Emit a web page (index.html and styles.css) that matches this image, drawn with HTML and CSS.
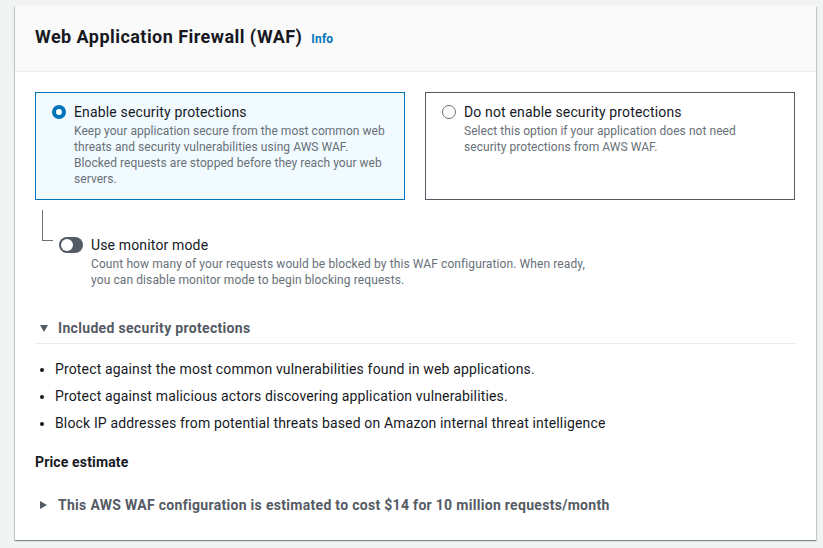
FILE: index.html
```html
<!DOCTYPE html>
<html lang="en">
<head>
<meta charset="utf-8">
<title>Web Application Firewall (WAF)</title>
<link rel="stylesheet" href="styles.css">
</head>
<body>
<section class="panel">
  <header class="panel-header">
    <h2 class="panel-title">Web Application Firewall (WAF)</h2>
    <a class="info" href="#">Info</a>
  </header>
  <div class="panel-body">
    <div class="tiles">
      <label class="tile tile-selected">
        <span class="radio radio-on"></span>
        <span class="tile-text">
          <span class="tile-title">Enable security protections</span>
          <span class="tile-desc">Keep your application secure from the most common web threats and security vulnerabilities using AWS WAF. Blocked requests are stopped before they reach your web servers.</span>
        </span>
      </label>
      <label class="tile">
        <span class="radio"></span>
        <span class="tile-text">
          <span class="tile-title">Do not enable security protections</span>
          <span class="tile-desc">Select this option if your application does not need security protections from AWS WAF.</span>
        </span>
      </label>
    </div>

    <div class="monitor">
      <span class="connector"></span>
      <div class="monitor-content">
        <span class="toggle"><span class="knob"></span></span>
        <div class="monitor-text">
          <div class="monitor-title">Use monitor mode</div>
          <div class="monitor-desc">Count how many of your requests would be blocked by this WAF configuration. When ready, you can disable monitor mode to begin blocking requests.</div>
        </div>
      </div>
    </div>

    <div class="expander">
      <div class="expander-head">
        <span class="caret caret-down"></span>
        <span>Included security protections</span>
      </div>
      <ul class="bullets">
        <li>Protect against the most common vulnerabilities found in web applications.</li>
        <li>Protect against malicious actors discovering application vulnerabilities.</li>
        <li>Block IP addresses from potential threats based on Amazon internal threat intelligence</li>
      </ul>
    </div>

    <div class="price-label">Price estimate</div>
    <div class="price-row">
      <span class="caret caret-right"></span>
      <span>This AWS WAF configuration is estimated to cost $14 for 10 million requests/month</span>
    </div>
  </div>
</section>
</body>
</html>
```

FILE: styles.css
```css
* { box-sizing: border-box; }
html, body { margin: 0; padding: 0; }
body {
  background: #f2f3f3;
  font-family: Roboto, "Liberation Sans", Arial, sans-serif;
  color: #16191f;
  font-size: 14px;
  line-height: 22px;
  letter-spacing: 0.15px;
  padding: 6px 7px 7px 15px;
}
.panel {
  width: 801px;
  background: #fff;
  box-shadow: 0 1px 1px 0 rgba(0,28,36,0.3), 1px 1px 1px 0 rgba(0,28,36,0.15), -1px 1px 1px 0 rgba(0,28,36,0.15);
}
.panel-header {
  display: flex;
  align-items: baseline;
  gap: 9px;
  height: 66px;
  padding: 20px 20px 0 20px;
  background: #fafafa;
  border-bottom: 1px solid #eaeded;
}
.panel-title {
  margin: 0;
  font-size: 18px;
  line-height: 22px;
  font-weight: 700;
  letter-spacing: 0.45px;
  color: #16191f;
}
.info {
  font-size: 12px;
  font-weight: 700;
  color: #0073bb;
  text-decoration: none;
}
.panel-body {
  padding: 20px 20px 24px 20px;
}
.tiles {
  display: grid;
  grid-template-columns: 370px 370px;
  gap: 20px;
}
.tile {
  display: flex;
  gap: 8px;
  padding: 8px 16px 12px 16px;
  border: 1px solid #545b64;
  background: #fff;
}
.tile-selected {
  border-color: #0073bb;
  background: #f1faff;
}
.radio {
  flex: none;
  width: 14px;
  height: 14px;
  margin-top: 4px;
  border-radius: 50%;
  border: 1.5px solid #687078;
  background: #fff;
}
.radio-on {
  border: 4px solid #0073bb;
}
.tile-text { display: flex; flex-direction: column; }
.tile-title { font-size: 14px; line-height: 22px; color: #16191f; }
.tile-desc { font-size: 12px; line-height: 16px; color: #687078; letter-spacing: 0.05px; }

.monitor {
  display: flex;
  margin-top: 10px;
  padding-left: 7px;
}
.connector {
  flex: none;
  width: 11px;
  height: 31px;
  border-left: 1px solid #687078;
  border-bottom: 1px solid #687078;
  margin-right: 6px;
}
.monitor-content {
  display: flex;
  gap: 8px;
  margin-top: 24px;
}
.toggle {
  flex: none;
  position: relative;
  width: 24px;
  height: 16px;
  margin-top: 3px;
  border-radius: 8px;
  background: #545b64;
}
.knob {
  position: absolute;
  left: 2px;
  top: 2px;
  width: 12px;
  height: 12px;
  border-radius: 50%;
  background: #fff;
}
.monitor-title { font-size: 14px; line-height: 22px; }
.monitor-desc { font-size: 12px; line-height: 16px; color: #687078; letter-spacing: 0.1px; width: 505px; }

.expander { margin-top: 29px; }
.expander-head {
  display: flex;
  align-items: center;
  gap: 10px;
  padding: 0 0 4px 5px;
  font-weight: 700;
  letter-spacing: 0.32px;
  color: #545b64;
  border-bottom: 1px solid #eaeded;
}
.caret { width: 0; height: 0; flex: none; }
.caret-down {
  border-left: 4px solid transparent;
  border-right: 4px solid transparent;
  border-top: 7px solid #545b64;
}
.caret-right {
  border-top: 4px solid transparent;
  border-bottom: 4px solid transparent;
  border-left: 7px solid #545b64;
}
.bullets {
  margin: 14px 0 0 0;
  padding-left: 20px;
}
.bullets li { margin-bottom: 5px; }
.price-label {
  margin-top: 17px;
  font-weight: 700;
}
.price-row {
  display: flex;
  align-items: center;
  gap: 11px;
  margin-top: 21px;
  padding-left: 5px;
  font-weight: 700;
  letter-spacing: 0.3px;
  color: #545b64;
}
```
